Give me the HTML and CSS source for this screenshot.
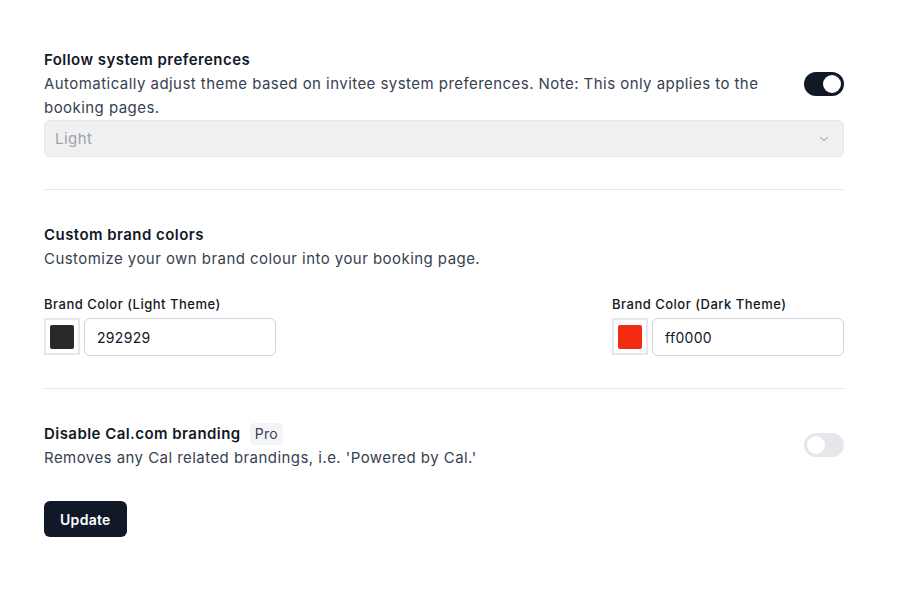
FILE: index.html
```html
<!DOCTYPE html>
<html>
<head>
<meta charset="utf-8">
<link rel="stylesheet" href="styles.css">
</head>
<body>
<main class="page">
  <section class="section first">
    <div class="row">
      <div class="text">
        <h3 class="title">Follow system preferences</h3>
        <p class="desc">Automatically adjust theme based on invitee system preferences. Note: This only applies to the booking pages.</p>
      </div>
      <span class="toggle on"><span class="knob"></span></span>
    </div>
    <div class="select">
      <span>Light</span>
      <svg class="chev" width="14" height="14" viewBox="0 0 24 24" fill="none" stroke="currentColor" stroke-width="2" stroke-linecap="round" stroke-linejoin="round"><path d="M6 9l6 6 6-6"/></svg>
    </div>
  </section>
  <hr class="divider">
  <section class="section">
    <h3 class="title">Custom brand colors</h3>
    <p class="desc">Customize your own brand colour into your booking page.</p>
    <div class="colors">
      <div class="field">
        <label class="label">Brand Color (Light Theme)</label>
        <div class="color-input">
          <span class="swatch-box"><span class="swatch dark"></span></span>
          <span class="hex">292929</span>
        </div>
      </div>
      <div class="field">
        <label class="label">Brand Color (Dark Theme)</label>
        <div class="color-input">
          <span class="swatch-box"><span class="swatch red"></span></span>
          <span class="hex">ff0000</span>
        </div>
      </div>
    </div>
  </section>
  <hr class="divider">
  <section class="section">
    <div class="row center">
      <div class="text">
        <h3 class="title">Disable Cal.com branding <span class="badge">Pro</span></h3>
        <p class="desc">Removes any Cal related brandings, i.e. 'Powered by Cal.'</p>
      </div>
      <span class="toggle off"><span class="knob"></span></span>
    </div>
    <button class="btn">Update</button>
  </section>
</main>
</body>
</html>
```
FILE: styles.css
```css
* { box-sizing: border-box; }
body {
  margin: 0;
  background: #fff;
  font-family: Inter, "Noto Sans", sans-serif;
  color: #111827;
}
.page {
  width: 800px;
  margin-left: 44px;
  padding-top: 48px;
}
.title {
  margin: 0;
  font-size: 15px;
  letter-spacing: 0.45px;
  line-height: 24px;
  font-weight: 600;
  color: #111827;
  display: flex;
  align-items: center;
  gap: 9px;
}
.desc {
  margin: 0;
  font-size: 15px;
  letter-spacing: 0.45px;
  line-height: 24px;
  color: #374151;
}
.row {
  display: flex;
  align-items: flex-start;
  justify-content: space-between;
}
.row.center { align-items: center; }
.text {
  flex: 1;
  margin-right: 40px;
}
.toggle {
  flex: none;
  width: 40px;
  height: 24px;
  border-radius: 12px;
  padding: 3px;
  display: flex;
  align-items: center;
}
.first .toggle { margin-top: 24px; }
.section .row.center .toggle { margin-top: -2px; }
.toggle.on { background: #111827; justify-content: flex-end; }
.toggle.off { background: #e5e7eb; justify-content: flex-start; }
.knob {
  width: 18px;
  height: 18px;
  border-radius: 50%;
  background: #fff;
}
.select {
  margin-top: 0;
  height: 37px;
  border: 1px solid #e5e7eb;
  border-radius: 6px;
  background: #f0f0f0;
  display: flex;
  align-items: center;
  justify-content: space-between;
  padding: 0 12px 0 10px;
  font-size: 15px;
  letter-spacing: 0.45px;
  color: #9ca3af;
}
.chev { color: #b0b4bb; }
.divider {
  border: 0;
  border-top: 1px solid #e5e7eb;
  margin: 32px 0 33px;
}
.colors {
  margin-top: 23px;
  display: flex;
  justify-content: space-between;
}
.label {
  display: block;
  font-size: 13px;
  letter-spacing: 0.5px;
  line-height: 20px;
  font-weight: 500;
  color: #111827;
  margin-bottom: 4px;
}
.color-input {
  display: flex;
  gap: 4px;
}
.swatch-box {
  width: 36px;
  height: 37px;
  border: 2px solid #e5e7eb;
  display: flex;
  align-items: center;
  justify-content: center;
}
.swatch {
  width: 24px;
  height: 24px;
  border-radius: 2px;
}
.swatch.dark { background: #292929; }
.swatch.red { background: #f22c13; }
.hex {
  width: 192px;
  height: 38px;
  border: 1px solid #d1d5db;
  border-radius: 6px;
  display: flex;
  align-items: center;
  padding-left: 12px;
  font-size: 14px;
  letter-spacing: 0.3px;
  color: #111827;
}
.badge {
  font-size: 14px;
  font-weight: 400;
  letter-spacing: 0.3px;
  line-height: 22px;
  background: #f3f4f6;
  color: #374151;
  border-radius: 4px;
  padding: 0 5px;
}
.btn {
  margin-top: 31px;
  height: 36px;
  padding: 0 16px;
  border: 0;
  border-radius: 6px;
  background: #111827;
  color: #fff;
  font-family: Inter, sans-serif;
  font-size: 14px;
  letter-spacing: 0.3px;
  font-weight: 600;
}
```
